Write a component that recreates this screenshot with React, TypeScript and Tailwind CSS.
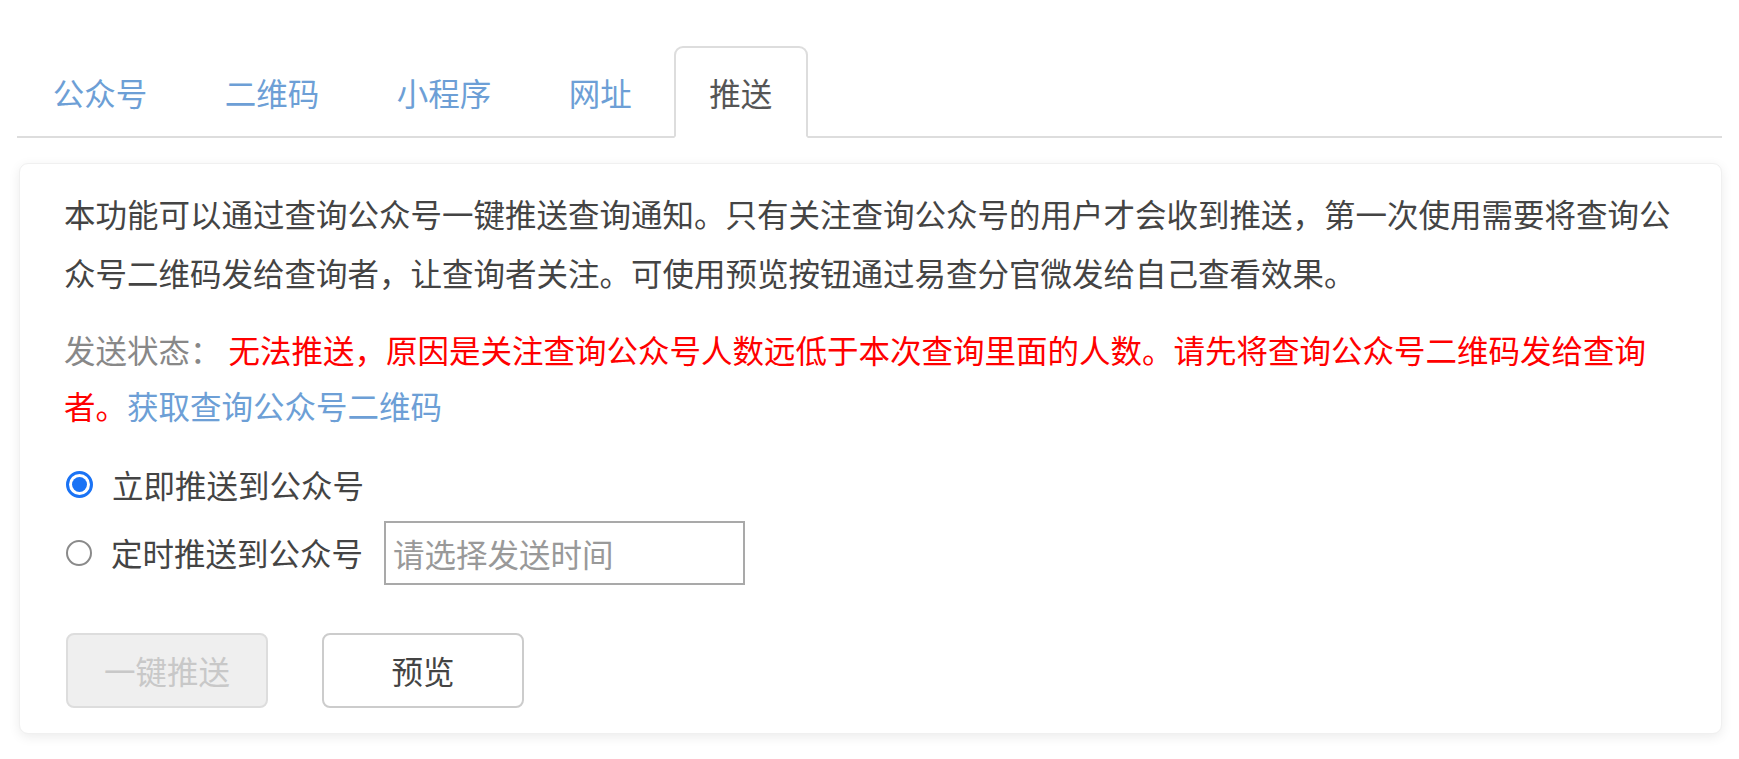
import { useState } from 'react'

const tabs = ['公众号', '二维码', '小程序', '网址', '推送']

function Radio({ checked }: { checked: boolean }) {
  return checked ? (
    <span className="flex h-[27px] w-[27px] shrink-0 items-center justify-center rounded-full border-[3px] border-[#1a73f5] bg-white">
      <span className="block h-[15px] w-[15px] rounded-full bg-[#1a73f5]" />
    </span>
  ) : (
    <span className="block h-[26px] w-[26px] shrink-0 rounded-full border-2 border-[#8a8a8a] bg-white" />
  )
}

export default function App() {
  const [active, setActive] = useState(4)
  const [mode, setMode] = useState<'now' | 'timer'>('now')

  return (
    <div className="min-h-screen bg-white px-[17px] pt-[46px] font-['Noto_Sans_CJK_SC',sans-serif] text-[31.5px] text-[#444]">
      <ul className="flex border-b-2 border-[#dddddd]">
        {tabs.map((t, i) => (
          <li key={t} className="-mb-[2px] mr-[6px]">
            <button
              type="button"
              onClick={() => setActive(i)}
              className={
                i === active
                  ? 'block rounded-t-[9px] border-2 border-[#dddddd] border-b-transparent bg-white px-[33.75px] py-[21.5px] leading-[45px] text-[#555]'
                  : 'block rounded-t-[9px] border-2 border-transparent px-[33.75px] py-[21.5px] leading-[45px] text-[#6d9fd6]'
              }
            >
              {t}
            </button>
          </li>
        ))}
      </ul>

      <div className="ml-[2px] mt-[25px] rounded-[9px] border border-[#f0f0f0] bg-white px-[44px] pb-[25px] pt-[20px] shadow-[0_3px_12px_rgba(0,0,0,0.08)]">
        <p className="leading-[59px]">
          本功能可以通过查询公众号一键推送查询通知。只有关注查询公众号的用户才会收到推送，第一次使用需要将查询公众号二维码发给查询者，让查询者关注。可使用预览按钮通过易查分官微发给自己查看效果。
        </p>

        <p className="mt-[19px] leading-[56px]">
          <span className="text-[#888]">发送状态： </span>
          <span className="text-[#ff0000]">
            无法推送，原因是关注查询公众号人数远低于本次查询里面的人数。请先将查询公众号二维码发给查询者。
          </span>
          <a className="cursor-pointer text-[#6d9fd6]">获取查询公众号二维码</a>
        </p>

        <div className="mt-[29px] flex flex-col gap-[14px]">
          <label className="flex h-[45px] cursor-pointer items-center" onClick={() => setMode('now')}>
            <span className="ml-[2px] mr-[19px]">
              <Radio checked={mode === 'now'} />
            </span>
            <span>立即推送到公众号</span>
          </label>
          <div className="flex items-center">
            <label className="flex cursor-pointer items-center" onClick={() => setMode('timer')}>
              <span className="ml-[2px] mr-[19px]">
                <Radio checked={mode === 'timer'} />
              </span>
              <span>定时推送到公众号</span>
            </label>
            <input
              placeholder="请选择发送时间"
              className="ml-[21px] h-[64px] w-[361px] border-2 border-[#a9a9a9] px-[7px] text-[31.5px] text-[#444] outline-none placeholder:text-[#999]"
            />
          </div>
        </div>

        <div className="ml-[2px] mt-[48px] flex gap-[54px]">
          <button
            type="button"
            disabled
            className="h-[75px] w-[202px] rounded-[8px] border-2 border-[#dddddd] bg-[#efefef] text-[#c8c8c8]"
          >
            一键推送
          </button>
          <button
            type="button"
            className="h-[75px] w-[202px] rounded-[8px] border-2 border-[#cccccc] bg-white text-[#444]"
          >
            预览
          </button>
        </div>
      </div>
    </div>
  )
}
